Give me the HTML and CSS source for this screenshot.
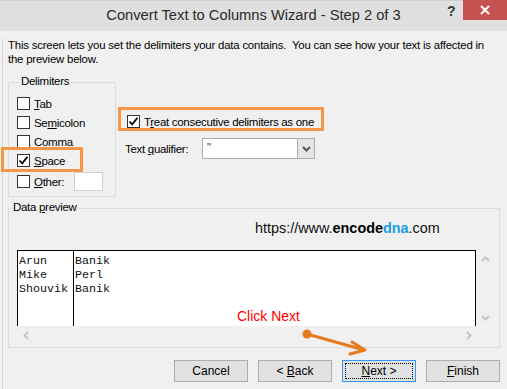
FILE: index.html
```html
<!DOCTYPE html>
<html lang="en">
<head>
  <meta charset="UTF-8" />
  <title>Convert Text to Columns Wizard - Step 2 of 3</title>
  <link rel="stylesheet" href="styles.css">
</head>
<body>
  <div class="window">
    <div class="titlebar">
      <span class="title">Convert Text to Columns Wizard - Step 2 of 3</span>
      <span class="help">?</span>
      <button class="close">
        <svg width="10" height="10" viewBox="0 0 10 10"><path d="M1 1 L9 9 M9 1 L1 9" stroke="#fff" stroke-width="2"/></svg>
      </button>
    </div>

    <div class="content">
      <p class="intro">This screen lets you set the delimiters your data contains.&nbsp; You can see how your text is affected in<br>the preview below.</p>

      <div class="options">
        <div class="group delimiters">
          <span class="legend">Delimiters</span>
          <label class="check"><span class="box"></span><span><u>T</u>ab</span></label>
          <label class="check"><span class="box"></span><span>Se<u>m</u>icolon</span></label>
          <label class="check"><span class="box"></span><span>Comma</span></label>
          <label class="check"><span class="box checked"><svg width="11" height="11" viewBox="0 0 11 11"><path d="M1.5 5.5 L4.2 8.3 L9.5 1.8" fill="none" stroke="#000" stroke-width="1.8"/></svg></span><span><u>S</u>pace</span></label>
          <label class="check other"><span class="box"></span><span><u>O</u>ther:</span><span class="textbox"></span></label>
        </div>

        <div class="side">
          <label class="check treat"><span class="box checked"><svg width="11" height="11" viewBox="0 0 11 11"><path d="M1.5 5.5 L4.2 8.3 L9.5 1.8" fill="none" stroke="#000" stroke-width="1.8"/></svg></span><span>T<u>r</u>eat consecutive delimiters as one</span></label>
          <div class="qualifier">
            <span class="qual-label">Text <u>q</u>ualifier:</span>
            <div class="combo">
              <span class="combo-value">"</span>
              <span class="combo-btn">
                <svg width="9" height="6" viewBox="0 0 9 6"><path d="M1 1 L4.5 4.5 L8 1" fill="none" stroke="#555" stroke-width="2"/></svg>
              </span>
            </div>
          </div>
        </div>
      </div>

      <div class="group preview">
        <span class="legend">Data <u>p</u>review</span>
        <div class="url">https://www.<b>encode</b><b class="dna">dna</b>.com</div>
        <div class="scroller">
          <div class="sheet">
            <div class="col first">
              <div>Arun</div>
              <div>Mike</div>
              <div>Shouvik</div>
            </div>
            <div class="col">
              <div>Banik</div>
              <div>Perl</div>
              <div>Banik</div>
            </div>
          </div>
          <div class="vbar">
            <svg width="9" height="6" viewBox="0 0 9 6"><path d="M1 5 L4.5 1.5 L8 5" fill="none" stroke="#c4c4c4" stroke-width="2"/></svg>
            <svg width="9" height="6" viewBox="0 0 9 6"><path d="M1 1 L4.5 4.5 L8 1" fill="none" stroke="#c4c4c4" stroke-width="2"/></svg>
          </div>
          <div class="hbar">
            <svg width="6" height="9" viewBox="0 0 6 9"><path d="M5 1 L1.5 4.5 L5 8" fill="none" stroke="#c4c4c4" stroke-width="2"/></svg>
            <svg width="6" height="9" viewBox="0 0 6 9"><path d="M1 1 L4.5 4.5 L1 8" fill="none" stroke="#c4c4c4" stroke-width="2"/></svg>
          </div>
        </div>
      </div>

      <div class="buttons">
        <button class="btn">Cancel</button>
        <button class="btn">&lt; <u>B</u>ack</button>
        <button class="btn default"><span class="focus"><u>N</u>ext &gt;</span></button>
        <button class="btn"><u>F</u>inish</button>
      </div>
    </div>

    <!-- annotations drawn over the dialog -->
    <div class="mark mark-space"></div>
    <div class="mark mark-treat"></div>
    <div class="click-next">Click Next</div>
    <svg class="pointer" width="72" height="34" viewBox="300 324 72 34">
      <circle cx="307" cy="334" r="4.5" fill="#e57a1f"/>
      <path d="M307 334 L364 350 M352 342 L365 350 L350 354" fill="none" stroke="#e57a1f" stroke-width="3" stroke-linecap="round" stroke-linejoin="round"/>
    </svg>
  </div>
</body>
</html>
```

FILE: styles.css
```css
* {
  margin: 0;
  padding: 0;
  box-sizing: border-box;
}
html, body {
  background: #f0f0f0;
}
body {
  font-family: 'Liberation Sans', Arial, sans-serif;
  font-size: 11.5px;
  letter-spacing: -0.3px;
  color: #000;
}

.window {
  position: relative;
  width: 507px;
  height: 389px;
  overflow: hidden;
  background: #f0f0f0;
}

.titlebar {
  height: 31px;
  background: #dfdfdf;
  border-top: 1px solid #cfcfcf;
  display: flex;
  align-items: flex-start;
  letter-spacing: 0;
}
.title {
  flex: 1;
  padding-left: 60px;
  text-align: center;
  font-size: 14.7px;
  line-height: 28px;
  color: #2b2b2b;
  white-space: nowrap;
}
.help {
  width: 14px;
  margin-right: 2px;
  margin-top: 2px;
  font-size: 14px;
  font-weight: bold;
  line-height: 16px;
  color: #333;
}
.close {
  width: 44px;
  height: 20px;
  margin-top: -1px;
  border: none;
  background: #c75050;
  display: flex;
  align-items: center;
  justify-content: center;
}

.content {
  height: 358px;
  margin-left: 2px;
  border-left: 1px solid #d6d6d6;
  padding: 0 7px 0 5px;
}

.intro {
  margin-top: 7px;
  line-height: 14px;
  font-size: 11.4px;
  letter-spacing: -0.2px;
  white-space: nowrap;
}

.options {
  display: flex;
  margin-top: 16px;
}

.group {
  border: 1px solid #dcdcdc;
}
.legend {
  display: block;
  width: fit-content;
  margin: -10px 0 0 2px;
  padding: 0 2px;
  line-height: 16px;
  background: #f0f0f0;
}

.delimiters {
  width: 108px;
  height: 115px;
  padding-left: 8px;
}
.delimiters .legend {
  margin-bottom: 5px;
}

.check {
  display: flex;
  align-items: center;
  gap: 4px;
  height: 19px;
}
.box {
  width: 13px;
  height: 13px;
  border: 1px solid #333;
  background: #fff;
  display: flex;
  align-items: center;
  justify-content: center;
}
.other {
  height: 21px;
  margin-top: 1px;
}
.textbox {
  width: 29px;
  height: 19px;
  margin-left: 6px;
  border: 1px solid #cfcfcf;
  background: #fff;
}

.side {
  padding-left: 11px;
}
.treat {
  margin-top: 30px;
  white-space: nowrap;
}
.qualifier {
  display: flex;
  align-items: center;
  margin-top: 7px;
  margin-left: -2px;
}
.qual-label {
  width: 77px;
}
.combo {
  display: flex;
  width: 113px;
  height: 21px;
  border: 1px solid #acacac;
  background: #fff;
}
.combo-value {
  flex: 1;
  padding-left: 4px;
  line-height: 16px;
  color: #7a2020;
}
.combo-btn {
  width: 17px;
  border-left: 1px solid #acacac;
  background: #e5e5e5;
  display: flex;
  align-items: center;
  justify-content: center;
}

.preview {
  height: 140px;
  margin-top: 11px;
}
.url {
  margin: 4px 0 0 246px;
  font-size: 14.4px;
  letter-spacing: 0;
  line-height: 18px;
  color: #111;
}
.url b {
  color: #000;
}
.url .dna {
  color: #1ba1e2;
}

.scroller {
  display: grid;
  grid-template-columns: 459px 17px;
  grid-template-rows: 76px 15px;
  margin: 13px 0 0 8px;
}
.sheet {
  display: flex;
  background: #fff;
  border: 1px solid #000;
  border-bottom: none;
  font-family: 'Liberation Mono', 'Courier New', monospace;
  font-size: 11.67px;
  letter-spacing: 0;
  line-height: 14px;
  color: #111;
}
.col {
  padding: 3px 0 0 1px;
}
.col.first {
  width: 56px;
  border-right: 1px solid #000;
}
.vbar {
  display: flex;
  flex-direction: column;
  justify-content: space-between;
  align-items: center;
  padding: 6px 0 5px 2px;
}
.hbar {
  display: flex;
  justify-content: space-between;
  padding: 5px 4px 0 6px;
}

.buttons {
  display: flex;
  justify-content: flex-end;
  gap: 10px;
  margin-top: 12px;
}
.btn {
  width: 74px;
  height: 22px;
  border: 1px solid #adadad;
  background: #e1e1e1;
  font-family: 'Liberation Sans', Arial, sans-serif;
  font-size: 12px;
  color: #000;
}
.btn.default {
  border-color: #3399ff;
  padding: 2px;
}
.focus {
  display: block;
  height: 100%;
  line-height: 14px;
  border: 1px dotted #000;
}

.mark {
  position: absolute;
  border: 3px solid #f79646;
}
.mark-space {
  left: 1px;
  top: 147px;
  width: 82px;
  height: 25px;
}
.mark-treat {
  left: 118px;
  top: 107px;
  width: 206px;
  height: 24px;
}
.click-next {
  position: absolute;
  left: 237px;
  top: 308px;
  font-size: 14px;
  letter-spacing: 0;
  line-height: 17px;
  color: #ff0000;
}
.pointer {
  position: absolute;
  left: 300px;
  top: 324px;
}
```
